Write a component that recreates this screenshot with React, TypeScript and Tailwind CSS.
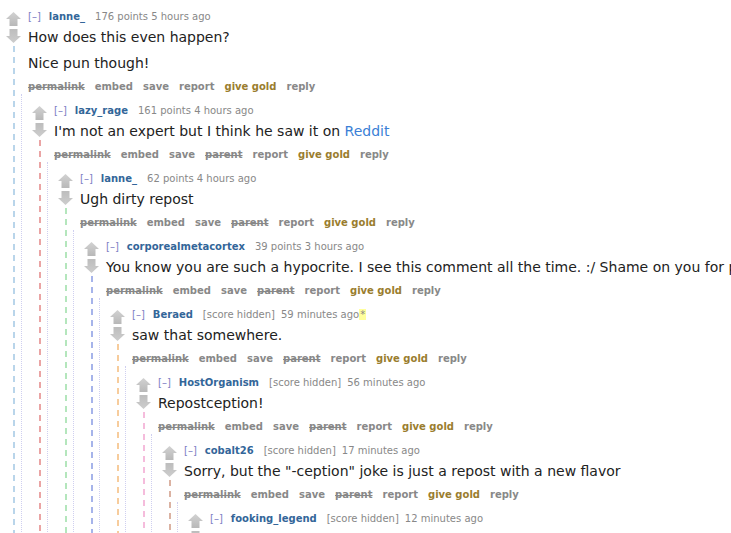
import React from "react";

type Item = {
  user: string;
  points?: string;
  time: string;
  edited?: boolean;
  body: React.ReactNode[];
};

const comments: Item[] = [
  {
    user: "lanne_",
    points: "176 points",
    time: "5 hours ago",
    body: ["How does this even happen?", "Nice pun though!"],
  },
  {
    user: "lazy_rage",
    points: "161 points",
    time: "4 hours ago",
    body: [
      <>
        I'm not an expert but I think he saw it on{" "}
        <span className="text-[#3b7fd6]">Reddit</span>
      </>,
    ],
  },
  { user: "lanne_", points: "62 points", time: "4 hours ago", body: ["Ugh dirty repost"] },
  {
    user: "corporealmetacortex",
    points: "39 points",
    time: "3 hours ago",
    body: [
      "You know you are such a hypocrite. I see this comment all the time. :/ Shame on you for posting it again.",
    ],
  },
  { user: "Beraed", time: "59 minutes ago", edited: true, body: ["saw that somewhere."] },
  { user: "HostOrganism", time: "56 minutes ago", body: ["Repostception!"] },
  {
    user: "cobalt26",
    time: "17 minutes ago",
    body: ['Sorry, but the "-ception" joke is just a repost with a new flavor'],
  },
  { user: "fooking_legend", time: "12 minutes ago", body: ["Well, at least it's better than a pun."] },
];

// thread line per depth
const threadLines = [
  "bg-[repeating-linear-gradient(to_bottom,#b9d5ea_0_6px,transparent_6px_11px)]",
  "bg-[repeating-linear-gradient(to_bottom,#eaa4a4_0_6px,transparent_6px_11px)]",
  "bg-[repeating-linear-gradient(to_bottom,#b4e6bc_0_6px,transparent_6px_11px)]",
  "bg-[repeating-linear-gradient(to_bottom,#a6b4ea_0_6px,transparent_6px_11px)]",
  "bg-[repeating-linear-gradient(to_bottom,#f7cc9c_0_6px,transparent_6px_11px)]",
  "bg-[repeating-linear-gradient(to_bottom,#f5bcdc_0_6px,transparent_6px_11px)]",
  "bg-[repeating-linear-gradient(to_bottom,#dbb2a2_0_6px,transparent_6px_11px)]",
  "bg-[repeating-linear-gradient(to_bottom,#c4c4ec_0_6px,transparent_6px_11px)]",
];

function Arrow({ down }: { down?: boolean }) {
  const id = down ? "arr-dn" : "arr-up";
  return (
    <svg width="15" height="14" viewBox="0 0 15 14" className="block ml-[6px]">
      <defs>
        <linearGradient id={id} x1="0" y1="0" x2="0" y2="1">
          <stop offset="0" stopColor={down ? "#bdbdbd" : "#d2d2d2"} />
          <stop offset="1" stopColor={down ? "#cdcdcd" : "#b8b8b8"} />
        </linearGradient>
      </defs>
      {down ? (
        <polygon points="3.5,0 11.5,0 11.5,7 15,7 7.5,14 0,7 3.5,7" fill={`url(#${id})`} />
      ) : (
        <polygon points="7.5,0 15,7 11.5,7 11.5,14 3.5,14 3.5,7 0,7" fill={`url(#${id})`} />
      )}
    </svg>
  );
}

function Comment({ depth }: { depth: number }) {
  const c = comments[depth];
  const hasChild = depth + 1 < comments.length;
  return (
    <div className="flex">
      <div className="w-[21px] shrink-0 flex flex-col pt-[12px]">
        <Arrow />
        <div className="h-[3px]" />
        <Arrow down />
        <div className={`ml-[13px] mt-[3px] w-[2px] flex-1 ${threadLines[depth]}`} />
      </div>
      <div className="flex-1 min-w-0">
        <div className="pl-[7px] pt-[11px]">
          <div className="text-[10px] leading-[12px] text-[#888] whitespace-nowrap">
            <span className="text-[#7d7dc4] mr-[8px]">[–]</span>
            <span className="font-bold text-[#336699] mr-[10px]">{c.user}</span>
            {c.points ? (
              <span>
                {c.points} {c.time}
              </span>
            ) : (
              <>
                <span className="mr-[6px]">[score hidden]</span>
                <span>{c.time}</span>
              </>
            )}
            {c.edited && <span className="bg-[#ffff9c] px-[1px]">*</span>}
          </div>
          <div className="mt-[4px] flex flex-col gap-[6px] text-[14px] leading-[20px] text-[#222] whitespace-nowrap">
            {c.body.map((p, i) => (
              <p key={i}>{p}</p>
            ))}
          </div>
          <div className="mt-[7px] flex gap-[10px] text-[10px] leading-[14px] font-bold text-[#888] whitespace-nowrap">
            <span className="line-through">permalink</span>
            <span>embed</span>
            <span>save</span>
            {depth > 0 && <span className="line-through">parent</span>}
            <span>report</span>
            <span className="text-[#9a7d2e]">give gold</span>
            <span>reply</span>
          </div>
        </div>
        {hasChild && (
          <div className="border-l border-dotted border-[#cfcff0] pl-[4px]">
            <Comment depth={depth + 1} />
          </div>
        )}
      </div>
    </div>
  );
}

export default function App() {
  return (
    <div className="w-screen h-screen overflow-hidden bg-white font-['DejaVu_Sans',Verdana,sans-serif]">
      <Comment depth={0} />
    </div>
  );
}
